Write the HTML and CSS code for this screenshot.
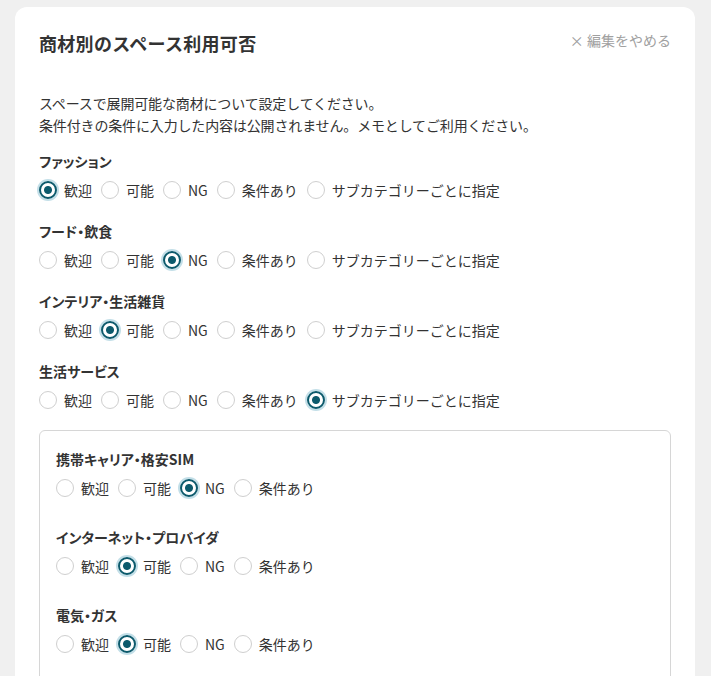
FILE: index.html
```html
<!DOCTYPE html>
<html lang="ja">
<head>
    <meta charset="UTF-8">
    <meta name="viewport" content="width=device-width, initial-scale=1.0">
    <title>商材別のスペース利用可否</title>
    <link rel="stylesheet" href="styles.css">
</head>
<body>
    <div class="card">
        <div class="card-head">
            <h2>商材別のスペース利用可否</h2>
            <a class="cancel" href="#">× 編集をやめる</a>
        </div>
        <p class="lead">スペースで展開可能な商材について設定してください。<br>条件付きの条件に入力した内容は公開されません。メモとしてご利用ください。</p>

        <div class="group">
            <p class="label">ファッション</p>
            <div class="options">
                <label><input type="radio" name="g1" checked>歓迎</label>
                <label><input type="radio" name="g1">可能</label>
                <label><input type="radio" name="g1">NG</label>
                <label><input type="radio" name="g1">条件あり</label>
                <label><input type="radio" name="g1">サブカテゴリーごとに指定</label>
            </div>
        </div>
        <div class="group">
            <p class="label">フード・飲食</p>
            <div class="options">
                <label><input type="radio" name="g2">歓迎</label>
                <label><input type="radio" name="g2">可能</label>
                <label><input type="radio" name="g2" checked>NG</label>
                <label><input type="radio" name="g2">条件あり</label>
                <label><input type="radio" name="g2">サブカテゴリーごとに指定</label>
            </div>
        </div>
        <div class="group">
            <p class="label">インテリア・生活雑貨</p>
            <div class="options">
                <label><input type="radio" name="g3">歓迎</label>
                <label><input type="radio" name="g3" checked>可能</label>
                <label><input type="radio" name="g3">NG</label>
                <label><input type="radio" name="g3">条件あり</label>
                <label><input type="radio" name="g3">サブカテゴリーごとに指定</label>
            </div>
        </div>
        <div class="group">
            <p class="label">生活サービス</p>
            <div class="options">
                <label><input type="radio" name="g4">歓迎</label>
                <label><input type="radio" name="g4">可能</label>
                <label><input type="radio" name="g4">NG</label>
                <label><input type="radio" name="g4">条件あり</label>
                <label><input type="radio" name="g4" checked>サブカテゴリーごとに指定</label>
            </div>
        </div>

        <div class="sub-box">
            <div class="group">
                <p class="label">携帯キャリア・格安SIM</p>
                <div class="options">
                    <label><input type="radio" name="s1">歓迎</label>
                    <label><input type="radio" name="s1">可能</label>
                    <label><input type="radio" name="s1" checked>NG</label>
                    <label><input type="radio" name="s1">条件あり</label>
                </div>
            </div>
            <div class="group">
                <p class="label">インターネット・プロバイダ</p>
                <div class="options">
                    <label><input type="radio" name="s2">歓迎</label>
                    <label><input type="radio" name="s2" checked>可能</label>
                    <label><input type="radio" name="s2">NG</label>
                    <label><input type="radio" name="s2">条件あり</label>
                </div>
            </div>
            <div class="group">
                <p class="label">電気・ガス</p>
                <div class="options">
                    <label><input type="radio" name="s3">歓迎</label>
                    <label><input type="radio" name="s3" checked>可能</label>
                    <label><input type="radio" name="s3">NG</label>
                    <label><input type="radio" name="s3">条件あり</label>
                </div>
            </div>
        </div>
    </div>
</body>
</html>
```

FILE: styles.css
```css
body {
    margin: 0;
    padding: 7px 16px 0 15px;
    background: #f0f0f0;
    font-family: "Noto Sans CJK JP", "Noto Sans", sans-serif;
    color: #333;
    overflow: hidden;
}
.card {
    background: #fff;
    border-radius: 12px;
    padding: 22px 24px 40px 24px;
    min-height: 720px;
}
.card-head {
    display: flex;
    justify-content: space-between;
    align-items: flex-start;
}
.card-head h2 {
    margin: 0;
    font-size: 18px;
    line-height: 28px;
    font-weight: bold;
    letter-spacing: 0.3px;
    color: #333;
}
.cancel {
    font-size: 14px;
    line-height: 24px;
    color: #a0a0a0;
    text-decoration: none;
    margin-top: -1px;
}
.lead {
    font-size: 14px;
    line-height: 22px;
    letter-spacing: -0.15px;
    margin: 35px 0 14px;
}
.group {
    margin-bottom: 19px;
}
.label {
    margin: 0 0 7px;
    font-size: 14px;
    line-height: 22px;
    font-weight: bold;
    font-feature-settings: "palt";
}
.options {
    display: flex;
    gap: 9px;
    font-size: 14px;
    line-height: 22px;
}
.options label {
    display: flex;
    align-items: center;
    gap: 7px;
}
input[type="radio"] {
    appearance: none;
    -webkit-appearance: none;
    margin: 0;
    width: 18px;
    height: 18px;
    border: 1px solid #cfcfcf;
    border-radius: 50%;
    background: #fff;
    box-sizing: border-box;
}
input[type="radio"]:checked {
    border: 2px solid #0c5a6c;
    background: radial-gradient(circle, #0c5a6c 0 3.5px, #fff 4.5px);
    box-shadow: 0 0 0 2px #c3dfe8;
}
.sub-box {
    border: 1px solid #d6d6d6;
    border-radius: 6px;
    padding: 17px 16px 0;
    margin-top: 12px;
}
.sub-box .group {
    margin-bottom: 27px;
}
```
